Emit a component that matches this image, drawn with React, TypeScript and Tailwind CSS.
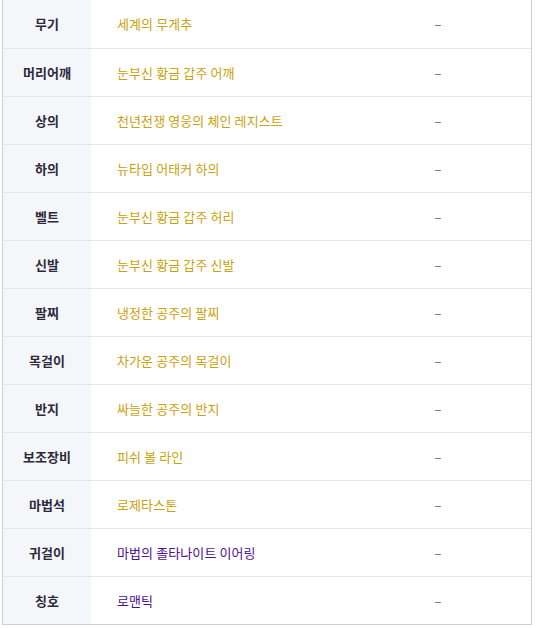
import React from "react";

type Row = { label: string; item: string; tone: "gold" | "purple" };

const rows: Row[] = [
  { label: "무기", item: "세계의 무게추", tone: "gold" },
  { label: "머리어깨", item: "눈부신 황금 갑주 어깨", tone: "gold" },
  { label: "상의", item: "천년전쟁 영웅의 체인 레지스트", tone: "gold" },
  { label: "하의", item: "뉴타입 어태커 하의", tone: "gold" },
  { label: "벨트", item: "눈부신 황금 갑주 허리", tone: "gold" },
  { label: "신발", item: "눈부신 황금 갑주 신발", tone: "gold" },
  { label: "팔찌", item: "냉정한 공주의 팔찌", tone: "gold" },
  { label: "목걸이", item: "차가운 공주의 목걸이", tone: "gold" },
  { label: "반지", item: "싸늘한 공주의 반지", tone: "gold" },
  { label: "보조장비", item: "피쉬 볼 라인", tone: "gold" },
  { label: "마법석", item: "로제타스톤", tone: "gold" },
  { label: "귀걸이", item: "마법의 졸타나이트 이어링", tone: "purple" },
  { label: "칭호", item: "로맨틱", tone: "purple" },
];

export default function App() {
  return (
    <div
      className="bg-white w-[536px] h-[628px] pl-[2px] pr-[4px]"
      style={{ fontFamily: '"Noto Sans CJK KR", "Noto Sans", sans-serif' }}
    >
      <div className="border border-t-0 border-[#cfcfcf] w-[530px]">
        {rows.map((row, i) => (
          <div
            key={row.label}
            className={
              "flex h-[48px] " + (i === 0 ? "" : "border-t border-[#e6e6e6]")
            }
          >
            <div className="w-[88px] bg-[#f5f6fa] flex items-center justify-center text-[13px] font-bold text-[#2c2a3a]">
              {row.label}
            </div>
            <div
              className={
                "flex-1 flex items-center pl-[26px] text-[13px] tracking-[0.1px] " +
                (row.tone === "gold" ? "text-[#c9a20c]" : "text-[#4b1190]")
              }
            >
              {row.item}
            </div>
            <div className="w-[186px] flex items-center justify-center text-[13px] text-[#666]">
              –
            </div>
          </div>
        ))}
      </div>
    </div>
  );
}
